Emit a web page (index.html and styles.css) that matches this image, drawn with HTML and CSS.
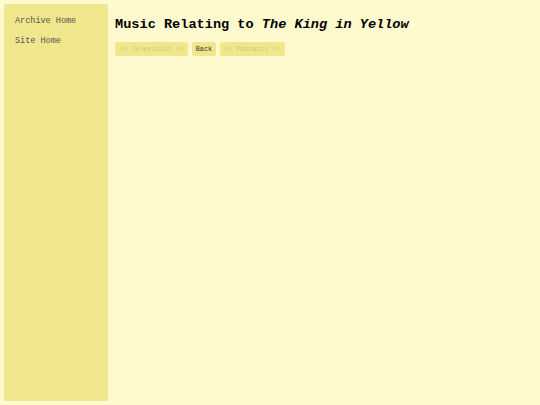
FILE: index.html
```html
<!DOCTYPE html>
<html>
<head>
<meta charset="utf-8">
<link rel="stylesheet" href="styles.css">
</head>
<body>
<div class="page">
  <nav class="sidebar">
    <a class="side-link" href="#">Archive Home</a>
    <a class="side-link" href="#">Site Home</a>
  </nav>
  <main class="main">
    <h1 class="title">Music Relating to <i>The King in Yellow</i></h1>
    <div class="nav-buttons">
      <span class="btn disabled">&lt;&lt; Television &lt;&lt;</span>
      <span class="btn">Back</span>
      <span class="btn disabled">&gt;&gt; Podcasts &gt;&gt;</span>
    </div>
  </main>
</div>
</body>
</html>
```
FILE: styles.css
```css
html, body {
  margin: 0;
  padding: 0;
  background: #fffacd;
  font-family: "Liberation Mono", "DejaVu Sans Mono", monospace;
}
.page {
  display: flex;
  padding: 4px;
  gap: 7px;
  height: 397px;
}
.sidebar {
  width: 104px;
  background: #f0e68c;
  border-radius: 3px;
  display: flex;
  flex-direction: column;
  padding: 12px 0 0 11px;
  box-sizing: border-box;
  gap: 9px;
}
.side-link {
  font-size: 8.5px;
  line-height: 11px;
  color: #555;
  text-decoration: none;
}
.main {
  flex: 1;
  padding-top: 13px;
}
.title {
  margin: 0;
  font-size: 13.6px;
  line-height: 16px;
  font-weight: bold;
  color: #000;
}
.nav-buttons {
  display: flex;
  gap: 4px;
  margin-top: 9px;
}
.btn {
  background: #f0e68c;
  border-radius: 2px;
  font-size: 6.75px;
  line-height: 8px;
  padding: 3px 4px;
  color: #333;
}
.btn.disabled {
  color: #d9c96a;
}
```
